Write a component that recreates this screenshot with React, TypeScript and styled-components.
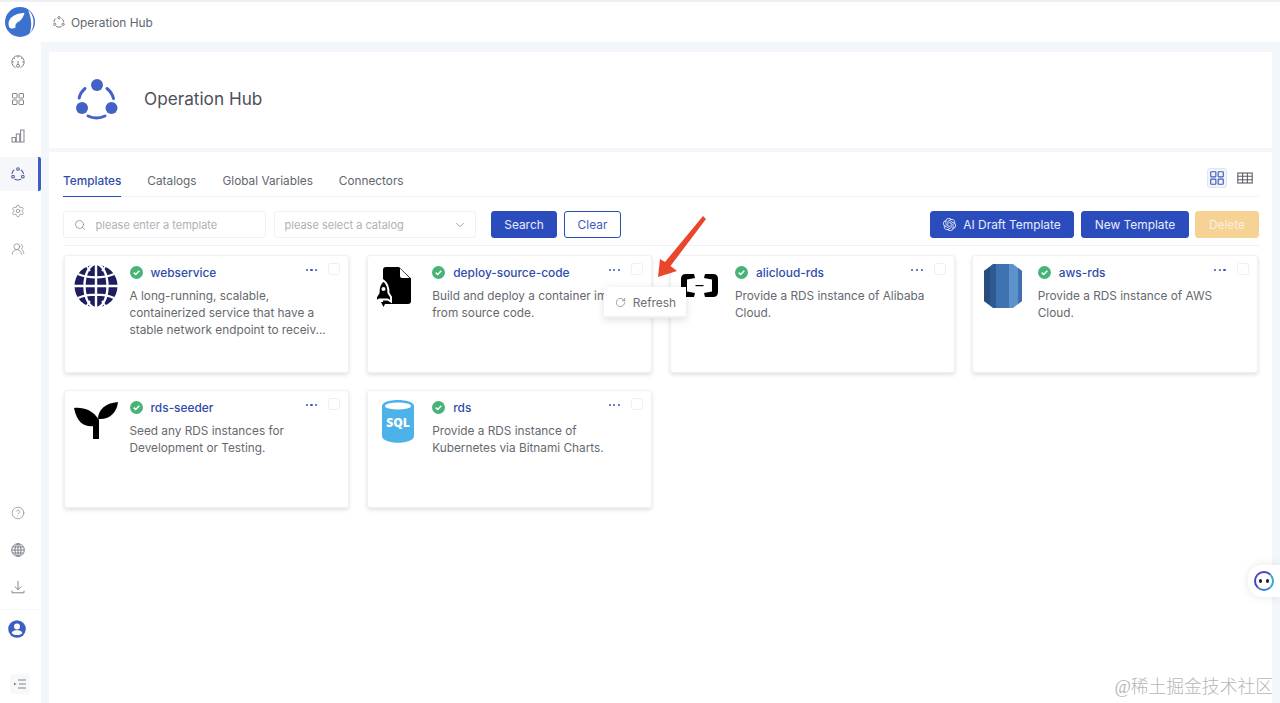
import React from 'react';
import styled, { createGlobalStyle } from 'styled-components';
import { ChevronDown, CircleHelp, RotateCw, Search, Settings, UsersRound } from 'lucide-react';
import { SiOpenai } from 'react-icons/si';

const BLUE = '#2b4cbc';

function HubIcon({ size = 14, color = '#6b7078', filled = false }: { size?: number; color?: string; filled?: boolean }) {
  const r = filled ? 6 : 4;
  const sw = filled ? 3 : 3.4;
  return (
    <svg width={size} height={size} viewBox="0 0 42 42" fill="none">
      <g fill={filled ? color : 'none'} stroke={color} strokeWidth={filled ? 0 : 3.2}>
        <circle cx="21" cy="6" r={r} />
        <circle cx="6" cy="29" r={r} />
        <circle cx="35.500" cy="29" r={r} />
      </g>
      <g stroke={color} strokeWidth={sw} strokeLinecap="round">
        <path d="M9 9.500 C6 12 4 15 3.200 19" />
        <path d="M31 9.500 C34 12 36.500 15 37.500 19.500" />
        <path d="M12 37 C17 39.500 24 39.500 29 37" />
      </g>
    </svg>
  );
}

function Logo() {
  return (
    <svg width="30" height="30" viewBox="0 0 30 30">
      <circle cx="15" cy="15" r="15" fill="#3b71cf" />
      <path d="M19 6 C14 6 8 8 5 12 C3 15 3 19 5 21 C7 22 9 21.500 10.500 20.500 C10 18 11 16 13 15 C16 14 18 10 19.500 6.500Z" fill="#fff" />
      <path d="M23 3 C27 6 28.500 11 28.500 15 C28.500 20 27 24 24.500 27 C26 22 26.500 18 26 14 C25.500 10 24.500 6 23 3Z" fill="#fff" />
    </svg>
  );
}

function GaugeIcon() {
  return (
    <svg width="14" height="14" viewBox="0 0 14 14" fill="none" stroke="#80858d" strokeWidth="1">
      <path d="M4.500 12.600 A6.200 6.200 0 1 1 9.500 12.600" />
      <circle cx="7" cy="10.800" r="1.500" />
      <path d="M7 9.300 V6 M7 .8 V2.600 M1 7 H2.800 M11.200 7 H13 M2.800 2.800 L4 4 M11.200 2.800 L10 4" />
    </svg>
  );
}

function GridIcon({ size = 14, color = '#80858d' }: { size?: number; color?: string }) {
  return (
    <svg width={size} height={size} viewBox="0 0 14 14" fill="none" stroke={color} strokeWidth="1">
      <rect x="1.500" y="1.500" width="4.500" height="4.500" rx=".5" />
      <rect x="8" y="1.500" width="4.500" height="4.500" rx=".5" />
      <rect x="1.500" y="8" width="4.500" height="4.500" rx=".5" />
      <rect x="8" y="8" width="4.500" height="4.500" rx=".5" />
    </svg>
  );
}

function TableIcon() {
  return (
    <svg width="16" height="14" viewBox="0 0 16 14" fill="none" stroke="#5c6068" strokeWidth="1.100">
      <rect x=".8" y="2" width="14.400" height="10" />
      <path d="M.8 5.300 H15.200 M.8 8.700 H15.200 M5.600 2 V12 M10.400 2 V12" />
    </svg>
  );
}

function BarsIcon() {
  return (
    <svg width="14" height="14" viewBox="0 0 14 14" fill="none" stroke="#80858d" strokeWidth="1">
      <rect x="1" y="8.500" width="3.400" height="4.500" />
      <rect x="5.300" y="5" width="3.400" height="8" />
      <rect x="9.600" y="1" width="3.400" height="12" />
    </svg>
  );
}

function MeshGlobeIcon() {
  return (
    <svg width="14" height="14" viewBox="0 0 14 14" fill="none" stroke="#7b8088" strokeWidth="1">
      <circle cx="7" cy="7" r="6.300" />
      <ellipse cx="7" cy="7" rx="3" ry="6.300" />
      <path d="M7 .7 V13.300 M.7 7 H13.300 M1.500 4 H12.500 M1.500 10 H12.500" />
    </svg>
  );
}

function TrayDownloadIcon() {
  return (
    <svg width="14" height="14" viewBox="0 0 14 14" fill="none" stroke="#80858d" strokeWidth="1">
      <path d="M7 1 V9.500 M3.800 6.500 L7 9.700 L10.200 6.500" />
      <path d="M1 10.500 V12.800 H13 V10.500" />
    </svg>
  );
}

function AvatarIcon() {
  return (
    <svg width="18" height="18" viewBox="0 0 18 18">
      <circle cx="9" cy="9" r="8.800" fill="#3d5fc4" />
      <circle cx="9" cy="6.500" r="3" fill="#fff" />
      <path d="M3.600 13 C4.500 10.800 7 10.300 9 10.300 C11 10.300 13.500 10.800 14.400 13 C13 14.800 11 15 9 15 C7 15 5 14.800 3.600 13Z" fill="#fff" />
    </svg>
  );
}

function CollapseIcon() {
  return (
    <svg width="12" height="10" viewBox="0 0 12 10" fill="none" stroke="#7d828a" strokeWidth="1">
      <path d="M4 1 H12 M5 5 H12 M4 9 H12" />
      <path d="M0 3.500 L2.500 5 L0 6.500Z" fill="#7d828a" stroke="none" />
    </svg>
  );
}

function StatusIcon() {
  return (
    <svg width="13" height="13" viewBox="0 0 13 13">
      <circle cx="6.500" cy="6.500" r="6.500" fill="#47b475" />
      <path d="M3.700 6.600 L5.700 8.500 L9.300 4.700" fill="none" stroke="#fff" strokeWidth="1.500" />
    </svg>
  );
}

function GlobeLogo() {
  return (
    <svg width="44" height="44" viewBox="0 0 44 44">
      <circle cx="22" cy="22" r="21.500" fill="#1f1c60" />
      <g fill="none" stroke="#fff" strokeWidth="2.400">
        <ellipse cx="22" cy="22" rx="11.500" ry="22" />
        <path d="M22 0 V44 M0 22 H44 M4 10 C14 14.500 30 14.500 40 10 M4 34 C14 29.500 30 29.500 40 34" />
        <path d="M12 1 L16 7 M32 1 L28 7 M12 43 L16 37 M32 43 L28 37" strokeWidth="1.800" />
      </g>
    </svg>
  );
}

function RocketFileLogo() {
  return (
    <svg width="44" height="44" viewBox="0 0 44 44">
      <path d="M10 3 H23 L35 14.500 V37 Q35 40 32 40 H10 Q7 40 7 37 V6 Q7 3 10 3Z" fill="#000" />
      <path d="M24 4.500 L33.500 14 H26 Q24 14 24 12Z" fill="#fff" />
      <path d="M7.500 16.500 C11 19 12.500 24 12.500 29 L15 33 V37.500 L11.500 35.500 H3.500 L0 37.500 V33 L2.500 29 C2.500 24 4 19 7.500 16.500Z" fill="#000" stroke="#fff" strokeWidth="2" />
      <circle cx="7.500" cy="25" r="2" fill="#fff" />
      <path d="M5 38 H10 L7.500 43Z" fill="#000" />
    </svg>
  );
}

function AliLogo() {
  return (
    <svg width="44" height="44" viewBox="0 0 44 44" fill="#000">
      <path d="M15 10 H7 Q2 10 2 15 V28 Q2 33 7 33 H15 L16 29 L8 27.500 V15.500 L16 14Z" />
      <path d="M26 10 H34 Q39 10 39 15 V28 Q39 33 34 33 H26 L25 29 L33 27.500 V15.500 L25 14Z" />
      <rect x="16.500" y="21" width="8" height="1.200" />
    </svg>
  );
}

function AwsLogo() {
  return (
    <svg width="44" height="44" viewBox="0 0 44 44">
      <path d="M11 0 H19 V44 H11 L2 37 V7Z" fill="#2e5a91" />
      <path d="M2 7 L8 3 V41 L2 37Z" fill="#264d7e" />
      <rect x="14" y="0" width="13" height="44" fill="#3f72b0" />
      <path d="M27 0 H31 L40 7 V37 L31 44 H27Z" fill="#5d92cc" />
      <path d="M36 4 L40 7 V37 L36 40Z" fill="#3e70ad" />
    </svg>
  );
}

function SeedlingLogo() {
  return (
    <svg width="44" height="44" viewBox="0 0 44 44" fill="#000">
      <path d="M0 9 C9 8 19 11 25 21 V40 H19 V27 C12 28 3 25 0 9Z" />
      <path d="M44 3 C43 13 36 21 24 20 C24 11 31 4 44 3Z" />
    </svg>
  );
}

function SqlLogo() {
  return (
    <svg width="44" height="44" viewBox="0 0 44 44">
      <path d="M6 7 C6 -1 38 -1 38 7 V37 C38 46 6 46 6 37Z" fill="#4eb2ea" />
      <ellipse cx="22" cy="7" rx="13" ry="3.600" fill="#fff" />
      <SqlText x="22" y="28" textAnchor="middle">SQL</SqlText>
    </svg>
  );
}

const CARDS = [
  {
    name: 'webservice',
    logo: <GlobeLogo />,
    text: 'A long-running, scalable, containerized service that have a stable network endpoint to receiv...',
  },
  {
    name: 'deploy-source-code',
    logo: <RocketFileLogo />,
    text: 'Build and deploy a container image from source code.',
    menu: true,
  },
  { name: 'alicloud-rds', logo: <AliLogo />, text: 'Provide a RDS instance of Alibaba Cloud.' },
  { name: 'aws-rds', logo: <AwsLogo />, text: 'Provide a RDS instance of AWS Cloud.' },
  { name: 'rds-seeder', logo: <SeedlingLogo />, text: 'Seed any RDS instances for Development or Testing.' },
  { name: 'rds', logo: <SqlLogo />, text: 'Provide a RDS instance of Kubernetes via Bitnami Charts.' },
];

export default function App() {
  return (
    <Page>
      <GlobalStyle />
      <TopBar>
        <LogoSlot>
          <Logo />
        </LogoSlot>
        <HubIcon size={12} />
        <Crumb>Operation Hub</Crumb>
      </TopBar>
      <Body>
        <Sidebar>
          <NavGroup>
            <NavItem><GaugeIcon /></NavItem>
            <NavItem><GridIcon /></NavItem>
            <NavItem><BarsIcon /></NavItem>
            <NavItem $active><HubIcon size={14} color="#4a5f9e" /></NavItem>
            <NavItem><Settings size={14} strokeWidth={1.2} /></NavItem>
            <NavItem><UsersRound size={14} strokeWidth={1.2} /></NavItem>
          </NavGroup>
          <NavGroup>
            <NavItem><CircleHelp size={14} strokeWidth={1.2} /></NavItem>
            <NavItem><MeshGlobeIcon /></NavItem>
            <NavItem><TrayDownloadIcon /></NavItem>
            <AvatarSlot><AvatarIcon /></AvatarSlot>
            <CollapseButton><CollapseIcon /></CollapseButton>
          </NavGroup>
        </Sidebar>
        <Main>
          <PageHeader>
            <HubIcon size={42} color="#4362c6" filled />
            <PageTitle>Operation Hub</PageTitle>
          </PageHeader>
          <Content>
            <TabsRow>
              <Tabs>
                <Tab $active>Templates</Tab>
                <Tab>Catalogs</Tab>
                <Tab>Global Variables</Tab>
                <Tab>Connectors</Tab>
              </Tabs>
              <ViewToggle>
                <ViewButton $active><GridIcon size={16} color="#3f5cb8" /></ViewButton>
                <ViewButton><TableIcon /></ViewButton>
              </ViewToggle>
            </TabsRow>
            <Toolbar>
              <Filters>
                <Field $width={203}>
                  <Search size={12} color="#7d8188" strokeWidth={1.4} />
                  <Placeholder>please enter a template</Placeholder>
                </Field>
                <Field $width={202}>
                  <Placeholder>please select a catalog</Placeholder>
                  <Chevron><ChevronDown size={14} color="#7d8188" strokeWidth={1.2} /></Chevron>
                </Field>
                <Button $variant="primary" $width={66} $gap={7}>Search</Button>
                <Button $variant="outline" $width={57} $gap={7}>Clear</Button>
              </Filters>
              <Actions>
                <Button $variant="primary" $width={144}>
                  <SiOpenai size={13} /> AI Draft Template
                </Button>
                <Button $variant="primary" $width={108} $gap={7}>New Template</Button>
                <Button $variant="disabled" $width={64} $gap={6}>Delete</Button>
              </Actions>
            </Toolbar>
            <CardGrid>
              {CARDS.map((card) => (
                <Card key={card.name}>
                  <LogoBox>{card.logo}</LogoBox>
                  <CardBody>
                    <CardHead>
                      <StatusIcon />
                      <CardName>{card.name}</CardName>
                    </CardHead>
                    <CardText>{card.text}</CardText>
                  </CardBody>
                  <CardControls>
                    <Dots>
                      <i />
                      <i />
                      <i />
                    </Dots>
                    <Check />
                  </CardControls>
                  {card.menu && (
                    <Menu>
                      <RotateCw size={11} color="#6d7178" strokeWidth={1.4} />
                      Refresh
                    </Menu>
                  )}
                </Card>
              ))}
            </CardGrid>
          </Content>
        </Main>
      </Body>
      <Arrow width="60" height="70" viewBox="0 0 60 70">
        <path d="M52 2 L55 5 L19.500 52 L26 57 L7 63 L9 45 L14 48Z" fill="#e9462c" />
      </Arrow>
      <BotButton>
        <BotFace>
          <i />
          <i />
        </BotFace>
      </BotButton>
      <Watermark>@稀土掘金技术社区</Watermark>
    </Page>
  );
}

const GlobalStyle = createGlobalStyle`
  html, body { margin: 0; padding: 0; height: 100%; }
  body { font-family: Inter, "Noto Sans", sans-serif; color: #606266; background: #fff; }
  * { box-sizing: border-box; }
`;

const Page = styled.div`
  position: relative;
  height: 100vh;
  overflow: hidden;
  display: flex;
  flex-direction: column;
`;

const TopBar = styled.header`
  height: 42px;
  flex: none;
  display: flex;
  align-items: center;
  border-top: 2px solid #eeeff1;
  background: #fff;
  font-size: 11.900px;
`;

const LogoSlot = styled.div`
  width: 53px;
  padding-left: 5px;
  display: flex;
`;

const Crumb = styled.span`
  margin-left: 6px;
  color: #62666d;
`;

const Body = styled.div`
  flex: 1;
  display: flex;
  min-height: 0;
  background: #f3f6fa;
`;

const Sidebar = styled.nav`
  width: 41px;
  flex: none;
  background: #fff;
  display: flex;
  flex-direction: column;
  justify-content: space-between;
  padding: 1px 0 1px;
`;

const NavGroup = styled.div`
  display: flex;
  flex-direction: column;
`;

const NavItem = styled.div<{ $active?: boolean }>`
  position: relative;
  height: 37.400px;
  display: flex;
  align-items: center;
  justify-content: center;
  padding-right: 5px;
  color: #80858d;

  ${(p) =>
    p.$active &&
    `
    &::before {
      content: '';
      position: absolute;
      inset: 2px 0;
      background: #f6f7fa;
      border-right: 3px solid #3d5fc4;
      border-radius: 0 2px 2px 0;
    }
    svg { position: relative; }
  `}
`;

const AvatarSlot = styled.div`
  height: 39px;
  display: flex;
  align-items: center;
  justify-content: center;
  padding-right: 7px;
  margin-top: 3px;
  border-top: 1px solid #f7f8fa;
`;

const CollapseButton = styled.div`
  width: 20px;
  height: 20px;
  margin: 26px 0 8px 10px;
  display: flex;
  align-items: center;
  justify-content: center;
  background: #f7f8fa;
  border-radius: 2px;
`;

const Main = styled.main`
  flex: 1;
  min-width: 0;
  padding: 10px 8px 0;
  display: flex;
  flex-direction: column;
  gap: 4px;
`;

const PageHeader = styled.section`
  height: 96px;
  flex: none;
  background: #fff;
  display: flex;
  align-items: center;
  padding-left: 27px;
  gap: 26px;
`;

const PageTitle = styled.h1`
  margin: -3px 0 0;
  font-size: 17.200px;
  font-weight: 400;
  color: #4b505a;
`;

const Content = styled.section`
  flex: 1;
  background: #fff;
  padding: 16px 13px 0 14px;
`;

const TabsRow = styled.div`
  height: 29px;
  display: flex;
  justify-content: space-between;
  border-bottom: 1px solid #f2f3f6;
`;

const Tabs = styled.div`
  display: flex;
  gap: 26px;
`;

const Tab = styled.div<{ $active?: boolean }>`
  height: 29px;
  padding-top: 6px;
  font-size: 11.800px;
  line-height: 15px;
  color: ${(p) => (p.$active ? '#2f4cab' : '#62666d')};
  ${(p) => p.$active && `border-bottom: 1px solid ${BLUE}; font-weight: 500;`}
`;

const ViewToggle = styled.div`
  display: flex;
  gap: 8.500px;
  padding-right: 4px;
`;

const ViewButton = styled.div<{ $active?: boolean }>`
  width: 20px;
  height: 20px;
  display: flex;
  align-items: center;
  justify-content: center;
  border-radius: 3px;
  ${(p) => p.$active && 'background: #f1f4fb; border: 1px solid #dfe5f6;'}
`;

const Toolbar = styled.div`
  margin-top: 14px;
  padding-bottom: 7px;
  display: flex;
  justify-content: space-between;
  border-bottom: 1px solid #f2f3f6;
`;

const Filters = styled.div`
  display: flex;
`;

const Actions = styled.div`
  display: flex;
`;

const Field = styled.div<{ $width: number }>`
  position: relative;
  width: ${(p) => p.$width}px;
  height: 27px;
  margin-right: 8px;
  display: flex;
  align-items: center;
  gap: 10px;
  padding: 0 9.500px;
  border: 1px solid #eff1f4;
  border-radius: 3px;
`;

const Placeholder = styled.span`
  font-size: 11px;
  color: #aeb1b6;
`;

const Chevron = styled.span`
  position: absolute;
  right: 8px;
  top: 6px;
  display: flex;
`;

const BUTTON_COLORS = {
  primary: `background: ${BLUE}; color: #e8ecf8; border: 1px solid ${BLUE};`,
  outline: `background: #fff; color: #3f5cb8; border: 1px solid ${BLUE};`,
  disabled: 'background: #f6d295; color: #fbefdd; border: 1px solid #f6d295;',
};

const Button = styled.button<{ $variant: keyof typeof BUTTON_COLORS; $width: number; $gap?: number }>`
  width: ${(p) => p.$width}px;
  height: 27px;
  margin-left: ${(p) => p.$gap ?? 0}px;
  display: flex;
  align-items: center;
  justify-content: center;
  gap: 7px;
  padding: 0;
  font-family: inherit;
  font-size: 11.900px;
  border-radius: 3px;
  ${(p) => BUTTON_COLORS[p.$variant]}
`;

const CardGrid = styled.div`
  margin: 9px 1.400px 0 1px;
  display: grid;
  grid-template-columns: repeat(4, 1fr);
  grid-auto-rows: 118px;
  gap: 17px 17.400px;
`;

const Card = styled.article`
  position: relative;
  display: flex;
  padding: 8px 0 0 8.500px;
  background: #fff;
  border: 1px solid #f0f1f3;
  border-radius: 3px;
  box-shadow: 0 2px 4px rgba(0, 0, 0, 0.12);
`;

const LogoBox = styled.div`
  width: 44px;
  height: 44px;
  flex: none;
`;

const CardBody = styled.div`
  width: 208px;
  margin-left: 12px;
  padding-top: 2px;
`;

const CardHead = styled.div`
  display: flex;
  align-items: center;
  gap: 8px;
  height: 13px;
  margin-bottom: 9px;
`;

const CardName = styled.span`
  font-size: 11.900px;
  font-weight: 500;
  color: #2f4cab;
`;

const CardText = styled.p`
  margin: 0;
  font-size: 11.800px;
  line-height: 17px;
  color: #65696f;
`;

const CardControls = styled.div`
  position: absolute;
  top: 7px;
  right: 8px;
  display: flex;
  align-items: flex-start;
  gap: 11px;
`;

const Dots = styled.div`
  display: flex;
  gap: 2.500px;
  padding-top: 6px;

  i {
    width: 2.200px;
    height: 2.200px;
    border-radius: 50%;
    background: #3a55b0;
  }
`;

const Check = styled.span`
  width: 12px;
  height: 12px;
  border: 1px solid #edeff2;
  border-radius: 3px;
`;

const Menu = styled.div`
  position: absolute;
  left: 236px;
  top: 31px;
  width: 82px;
  height: 31px;
  display: flex;
  align-items: center;
  gap: 7px;
  padding: 1px 0 0 11px;
  background: #fff;
  font-size: 11.900px;
  color: #6d7178;
  border-bottom: 2px solid #f0f1f4;
  box-shadow: 0 2px 8px rgba(0, 0, 0, 0.13);
  z-index: 2;
`;

const SqlText = styled.text`
  font-family: "Open Sans", sans-serif;
  font-size: 12px;
  font-weight: 800;
  fill: #fff;
`;

const Arrow = styled.svg`
  position: absolute;
  left: 651px;
  top: 214px;
  z-index: 3;
`;

const BotButton = styled.div`
  position: absolute;
  right: 0;
  top: 565px;
  width: 32px;
  height: 32px;
  display: flex;
  align-items: center;
  justify-content: center;
  background: #fff;
  border-radius: 14px 0 0 14px;
  box-shadow: 0 0 10px rgba(0, 0, 0, 0.1);
`;

const BotFace = styled.div`
  width: 20px;
  height: 20px;
  display: flex;
  align-items: center;
  justify-content: center;
  gap: 4px;
  border-radius: 50%;
  border: 2px solid #4b3fc6;
  border-right-color: #35a9c9;
  border-bottom-color: #3d7bcb;

  i {
    width: 3px;
    height: 4px;
    border-radius: 50%;
    background: #15152a;
  }
`;

const Watermark = styled.div`
  position: absolute;
  right: 7px;
  top: 672px;
  font-family: "Liberation Serif", "Noto Sans CJK SC", serif;
  font-size: 17.800px;
  font-weight: 300;
  color: #b4b6b9;
`;
